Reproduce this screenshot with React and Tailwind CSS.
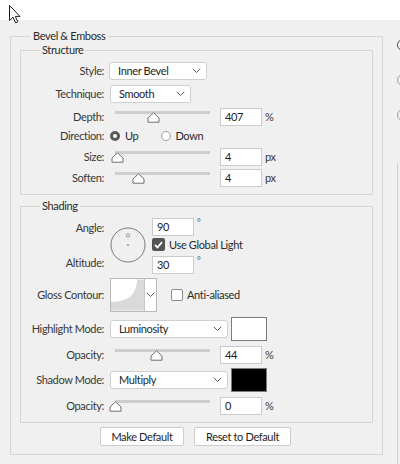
import React from 'react'

const font = "font-['Segoe_UI','Lato',sans-serif]"

function Chevron() {
  return (
    <svg width="9" height="6" viewBox="0 0 9 6" className="shrink-0">
      <path d="M0.8 0.8 L4.5 4.5 L8.2 0.8" fill="none" stroke="#5a5a5a" strokeWidth="1" />
    </svg>
  )
}

function Select({ className, children }) {
  return (
    <div className={`flex items-center justify-between h-[18px] bg-white border border-[#d0d0d0] rounded-[3px] pl-[8px] pr-[5px] text-[#1e1e1e] ${className}`}>
      <span>{children}</span>
      <Chevron />
    </div>
  )
}

function Field({ children, className = '' }) {
  return (
    <div className={`w-[42px] h-[18px] bg-white border border-[#cbcbcb] pl-[4px] leading-[16px] text-[#1e1e1e] ${className}`}>
      {children}
    </div>
  )
}

function Label({ children }) {
  return <span className="w-[83px] shrink-0 text-right text-[#383838]">{children}</span>
}

function Slider({ pos }) {
  // pos = thumb centre, measured from the slider's left edge
  return (
    <div className="relative ml-[6px] w-[100px] h-[18px] shrink-0">
      <div className="absolute top-[3px] left-[5px] right-0 h-[3px] bg-[#cdcdcd]" />
      <svg width="13" height="11" viewBox="0 0 13 11" className="absolute top-[4px]" style={{ left: pos - 6.5 }}>
        <path d="M6.5 0.8 L12 6 L12 10.2 L1 10.2 L1 6 Z" fill="#fff" stroke="#6e6e6e" strokeWidth="1" strokeLinejoin="round" />
      </svg>
    </div>
  )
}

function SliderRow({ label, pos, value, unit, className = '' }) {
  return (
    <div className={`flex items-center h-[18px] ${className}`}>
      <Label>{label}</Label>
      <Slider pos={pos} />
      <Field className="ml-[10px]">{value}</Field>
      <span className="ml-[3px] text-[#383838]">{unit}</span>
    </div>
  )
}

function Check({ checked }) {
  if (checked) {
    return (
      <div className="w-[13px] h-[13px] rounded-[2px] bg-[#555] flex items-center justify-center shrink-0">
        <svg width="9" height="8" viewBox="0 0 9 8">
          <path d="M1 4 L3.5 6.5 L8 1.2" fill="none" stroke="#fff" strokeWidth="1.8" />
        </svg>
      </div>
    )
  }
  return <div className="w-[12px] h-[12px] rounded-[2px] bg-white border border-[#8a8a8a] shrink-0" />
}

function Swatch({ color }) {
  return <div className={`ml-[3px] w-[36px] h-[24px] border border-[#7a7a7a] ${color}`} />
}

export default function App() {
  return (
    <div className={`relative w-[400px] h-[464px] bg-white overflow-hidden text-[11px] leading-[16px] tracking-[-0.35px] ${font}`}>
      {/* mouse pointer */}
      <svg width="14" height="20" viewBox="0 0 14 20" className="absolute left-[8px] top-[4px]">
        <path d="M1.5 1.5 L1.5 16.5 L5 13.2 L7.6 18.8 L9.8 17.8 L7.3 12.4 L12 12.4 Z" fill="#fff" stroke="#1a1a1a" strokeWidth="1" strokeLinejoin="round" />
      </svg>

      <div className="mt-[20px] h-[444px] bg-[#f0f0f0] flex">
        <fieldset className="ml-[10px] mt-[10px] w-[373px] shrink-0 self-start border border-[#d5d5d5] px-[9px] pb-[8px]">
          <legend className="ml-[10px] px-[3px] leading-[12px] text-[#2a2a2a]">Bevel &amp; Emboss</legend>

          {/* Structure */}
          <fieldset className="mt-[2px] border border-[#d5d5d5] pt-[6px] pb-[7px]">
            <legend className="ml-[19px] px-[2px] leading-[12px] text-[#2a2a2a]">Structure</legend>

            <div className="flex items-center h-[18px]">
              <Label>Style:</Label>
              <Select className="ml-[5px] w-[98px]">Inner Bevel</Select>
            </div>
            <div className="flex items-center h-[18px] mt-[5px]">
              <Label>Technique:</Label>
              <Select className="ml-[6px] w-[81px]">Smooth</Select>
            </div>
            <SliderRow label="Depth:" pos={43} value="407" unit="%" className="mt-[5px]" />
            <div className="flex items-center h-[18px] mt-[1px]">
              <Label>Direction:</Label>
              <div className="ml-[6px] w-[10px] h-[10px] rounded-full border-[3px] border-[#5a5a5a] bg-white shrink-0" />
              <span className="ml-[5px] text-[#2a2a2a]">Up</span>
              <div className="ml-[23px] w-[10px] h-[10px] rounded-full border border-[#9a9a9a] bg-white shrink-0" />
              <span className="ml-[4px] text-[#2a2a2a]">Down</span>
            </div>
            <SliderRow label="Size:" pos={7} value="4" unit="px" className="mt-[3px]" />
            <SliderRow label="Soften:" pos={28} value="4" unit="px" className="mt-[3px]" />
          </fieldset>

          {/* Shading */}
          <fieldset className="mt-[5px] border border-[#d5d5d5] pt-[6px] pb-[7px]">
            <legend className="ml-[19px] px-[2px] leading-[12px] text-[#2a2a2a]">Shading</legend>

            <div className="flex">
              <div className="w-[83px] h-[55px] py-[2px] flex flex-col justify-between text-right text-[#383838]">
                <span>Angle:</span>
                <span>Altitude:</span>
              </div>
              <svg width="36" height="36" viewBox="0 0 36 36" className="ml-[6px] mt-[9px] shrink-0">
                <circle cx="18" cy="18" r="17" fill="none" stroke="#7a7a7a" strokeWidth="1" />
                <circle cx="18" cy="8.5" r="1.7" fill="none" stroke="#8a8a8a" strokeWidth="0.9" />
                <circle cx="18" cy="18" r="0.9" fill="#8a8a8a" />
              </svg>
              <div className="ml-[6px] flex flex-col">
                <div className="flex items-start h-[17px]">
                  <Field className="h-[17px] leading-[15px]">90</Field>
                  <span className="ml-[3px] text-[9px] leading-[10px] text-[#555]">°</span>
                </div>
                <div className="flex items-center mt-[3px] h-[13px]">
                  <Check checked />
                  <span className="ml-[4px] text-[#2a2a2a]">Use Global Light</span>
                </div>
                <div className="flex items-start h-[17px] mt-[5px]">
                  <Field className="h-[17px] leading-[15px]">30</Field>
                  <span className="ml-[3px] text-[9px] leading-[10px] text-[#555]">°</span>
                </div>
              </div>
            </div>

            <div className="flex items-center h-[34px] mt-[5px]">
              <Label>Gloss Contour:</Label>
              <div className="ml-[6px] flex h-[34px] border border-[#b9b9b9] bg-white shrink-0">
                <svg width="34" height="32" viewBox="0 0 34 32" className="border-r border-[#c8c8c8]">
                  <path d="M27 0 L34 0 L34 32 L0 32 L0 23 C14 23 26 19 27 0 Z" fill="#dadada" />
                </svg>
                <div className="w-[11px] flex items-center justify-center">
                  <Chevron />
                </div>
              </div>
              <div className="ml-[14px]"><Check /></div>
              <span className="ml-[4px] text-[#2a2a2a]">Anti-aliased</span>
            </div>

            <div className="flex items-center h-[24px] mt-[5px]">
              <Label>Highlight Mode:</Label>
              <Select className="ml-[6px] w-[118px]">Luminosity</Select>
              <Swatch color="bg-white" />
            </div>
            <SliderRow label="Opacity:" pos={46} value="44" unit="%" className="mt-[5px]" />
            <div className="flex items-center h-[24px] mt-[4px]">
              <Label>Shadow Mode:</Label>
              <Select className="ml-[6px] w-[118px]">Multiply</Select>
              <Swatch color="bg-black" />
            </div>
            <SliderRow label="Opacity:" pos={5} value="0" unit="%" className="mt-[5px]" />
          </fieldset>

          <div className="flex mt-[4px] ml-[80px] gap-[10px]">
            <button className="w-[84px] h-[19px] bg-white border border-[#cccccc] rounded-[2px] text-[#1e1e1e] leading-[17px]">Make Default</button>
            <button className="w-[97px] h-[19px] bg-white border border-[#cccccc] rounded-[2px] text-[#1e1e1e] leading-[17px]">Reset to Default</button>
          </div>
        </fieldset>

        {/* edge of the next column */}
        <div className="flex-1 min-w-0 overflow-hidden flex flex-col items-start pl-[14px] pt-[19px]">
          <div className="w-[12px] h-[12px] rounded-full border-[1.5px] border-[#555] shrink-0" />
          <div className="mt-[23px] w-[12px] h-[12px] rounded-full border border-[#a0a0a0] shrink-0" />
          <div className="mt-[23px] w-[12px] h-[12px] rounded-full border border-[#a0a0a0] shrink-0" />
          <div className="mt-[42px] w-[20px] flex-1 border-l border-[#cfcfcf]" />
        </div>
      </div>
    </div>
  )
}
